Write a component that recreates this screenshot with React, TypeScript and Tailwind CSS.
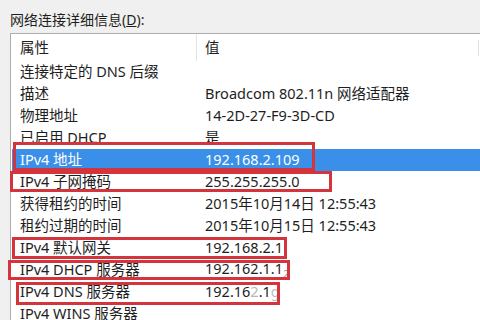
import React from "react";

const rows: { k: string; v: React.ReactNode; sel?: boolean }[] = [
  { k: "连接特定的 DNS 后缀", v: "" },
  { k: "描述", v: "Broadcom 802.11n 网络适配器" },
  { k: "物理地址", v: "14-2D-27-F9-3D-CD" },
  { k: "已启用 DHCP", v: "是" },
  { k: "IPv4 地址", v: "192.168.2.109", sel: true },
  { k: "IPv4 子网掩码", v: "255.255.255.0" },
  { k: "获得租约的时间", v: "2015年10月14日 12:55:43" },
  { k: "租约过期的时间", v: "2015年10月15日 12:55:43" },
  { k: "IPv4 默认网关", v: "192.168.2.1" },
  {
    k: "IPv4 DHCP 服务器",
    v: (
      <span>
        192.162.1.1<span className="text-[11px] text-[#8a8a8a] align-[-4px]">2</span>
      </span>
    ),
  },
  {
    k: "IPv4 DNS 服务器",
    v: (
      <span>
        192.16<span className="text-[#b8b8b8]">2</span>.1<span className="text-[#bdbdbd]">g</span>
      </span>
    ),
  },
  { k: "IPv4 WINS 服务器", v: "" },
];

const boxes = [
  "left-[13px] top-[142px] w-[302px] h-[29px]",
  "left-[10px] top-[171px] w-[322px] h-[21px]",
  "left-[12px] top-[237px] w-[275px] h-[22px]",
  "left-[8px] top-[260px] w-[282px] h-[20px]",
  "left-[16px] top-[282px] w-[264px] h-[23px]",
];

export default function App() {
  return (
    <div
      className="relative w-[480px] h-[320px] overflow-hidden bg-[#f0f0f0] text-[14.5px] text-[#1e1e1e]"
      style={{ fontFamily: '"Noto Sans", "Noto Sans CJK SC", sans-serif' }}
    >
      <div className="pl-[10px] pt-[9px] h-[33px] leading-[22px] text-[14px]">
        网络连接详细信息(<span className="underline">D</span>):
      </div>
      <div className="ml-[10px] bg-white border-l border-t border-[#adadad] h-[300px]">
        <div className="flex h-[27px] items-center">
          <div className="w-[186px] pl-[9px] border-r border-[#e3e3e3] h-full flex items-center">属性</div>
          <div className="flex-1 pl-[8px] h-full flex items-center">
            <span className="flex-1">值</span>
            <span className="w-px h-[16px] bg-[#e3e3e3] mr-[1px]" />
          </div>
        </div>
        {rows.map((r, i) => (
          <div
            key={i}
            className={
              r.sel
                ? "flex h-[22px] items-center bg-[#3a8fe8] text-white ml-[1px]"
                : "flex h-[22px] items-center"
            }
          >
            <div className={r.sel ? "w-[185px] pl-[8px] whitespace-nowrap" : "w-[186px] pl-[9px] whitespace-nowrap"}>{r.k}</div>
            <div className="flex-1 pl-[8px] whitespace-nowrap">{r.v}</div>
          </div>
        ))}
      </div>
      {boxes.map((b, i) => (
        <div key={i} className={`absolute border-[3px] border-[#d4353d] ${b}`} />
      ))}
    </div>
  );
}
